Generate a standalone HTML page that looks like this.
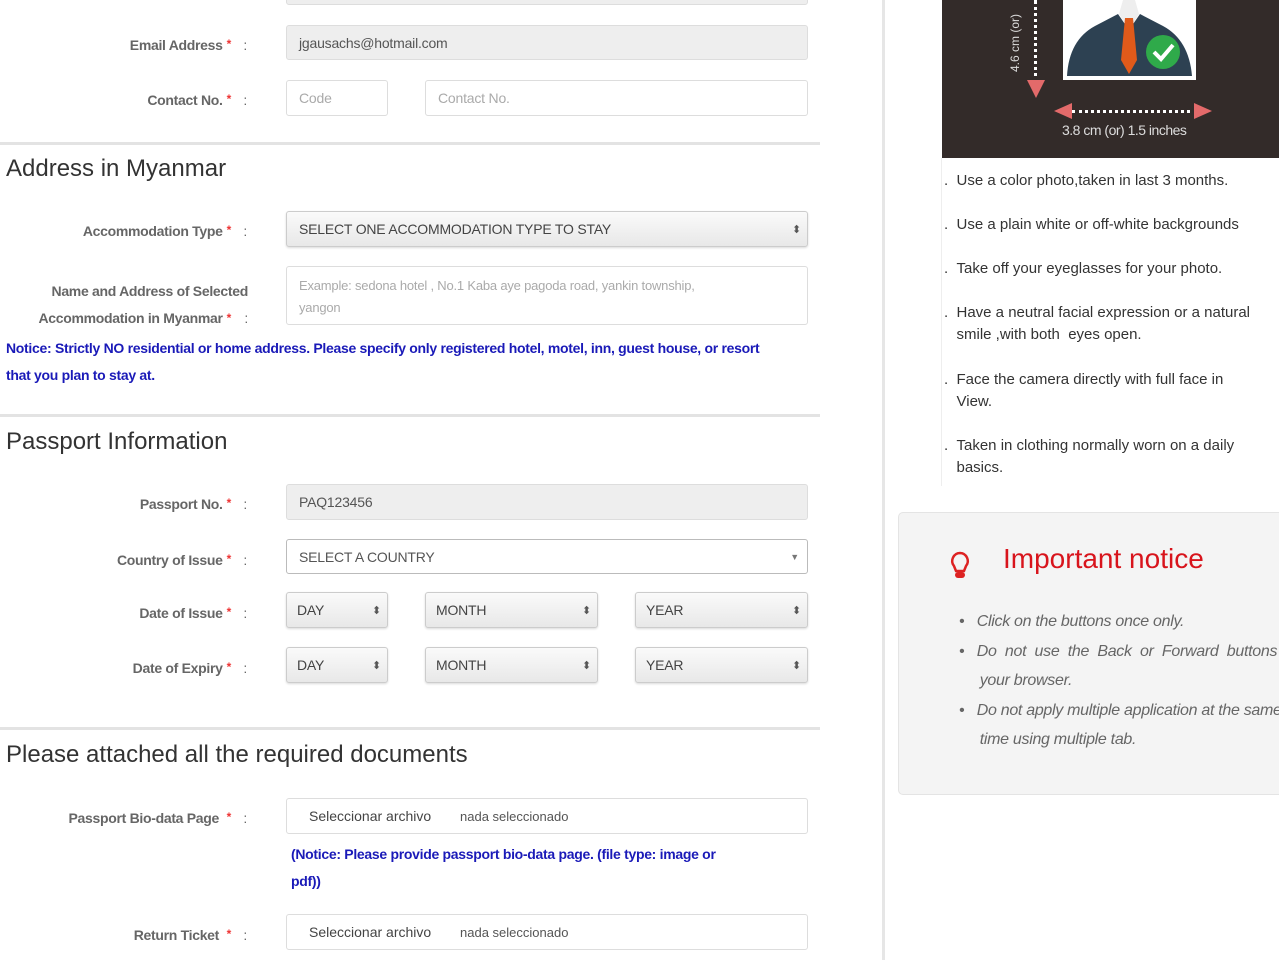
<!DOCTYPE html>
<html><head><meta charset="utf-8"><style>
*{margin:0;padding:0;box-sizing:border-box}
body{width:1279px;height:960px;background:#fff;position:relative;overflow:hidden;font-family:"Liberation Sans",sans-serif}
.a{position:absolute}
.lbl{position:absolute;right:1048px;font-size:14px;font-weight:bold;color:#666;text-align:right;white-space:nowrap;letter-spacing:-0.3px}
.lbl b{color:#e33;font-size:12px;vertical-align:top;margin-left:4px}
.lbl i{position:absolute;right:-16px;font-style:normal;font-weight:normal}
.in{position:absolute;border:1px solid #ddd;border-radius:3px;background:#fff;font-size:14px;color:#555;padding-left:12px;display:flex;align-items:center;letter-spacing:-0.2px}
.gray{background:#eee}
.sel{background:linear-gradient(#fafafa,#e8e8e8);border:1px solid #ccc;box-shadow:0 1px 2px rgba(0,0,0,.15);color:#444}
.sel:after{content:"⬍";position:absolute;right:6px;font-size:11px;color:#555}
.hr{position:absolute;left:0;width:820px;height:3px;background:#e3e3e3}
.h{position:absolute;left:6px;font-size:24px;color:#333}
.blue{position:absolute;color:#1a1ab8;font-size:14px;font-weight:bold;line-height:27px;letter-spacing:-0.3px}
.file{position:absolute;left:286px;width:522px;height:36px;border:1px solid #ddd;border-radius:3px;font-size:14px;color:#444}
.file span{position:absolute;left:22px;top:9px}
.file em{position:absolute;left:173px;top:10px;font-style:normal;font-size:13px;color:#555}
.rt{position:absolute;left:944px;font-size:15px;color:#333;line-height:22px;width:340px}
</style></head><body>
<div class="in gray" style="left:286px;top:-10px;width:522px;height:15px"></div>
<div class="lbl" style="top:37px">Email Address<b>*</b><i>:</i></div>
<div class="in gray" style="left:286px;top:25px;width:522px;height:35px">jgausachs@hotmail.com</div>
<div class="lbl" style="top:92px">Contact No.<b>*</b><i>:</i></div>
<div class="in" style="left:286px;top:80px;width:102px;height:36px;color:#aaa">Code</div>
<div class="in" style="left:425px;top:80px;width:383px;height:36px;color:#aaa">Contact No.</div>
<div class="hr" style="top:142px"></div>
<div class="h" style="top:155px">Address in Myanmar</div>
<div class="lbl" style="top:223px">Accommodation Type<b>*</b><i>:</i></div>
<div class="in sel" style="left:286px;top:211px;width:522px;height:36px">SELECT ONE ACCOMMODATION TYPE TO STAY</div>
<div class="lbl" style="top:278px;line-height:27px;right:1031px">Name and Address of Selected<br><span style="padding-right:17px">Accommodation in Myanmar<b>*</b></span><i style="top:27px;right:0">:</i></div>
<div class="in" style="left:286px;top:266px;width:522px;height:59px;align-items:flex-start;padding-top:8px;font-size:13px;color:#aaa;line-height:22px">Example: sedona hotel , No.1 Kaba aye pagoda road, yankin township,<br>yangon</div>
<div class="blue" style="left:6px;top:335px;width:770px">Notice: Strictly NO residential or home address. Please specify only registered hotel, motel, inn, guest house, or resort that you plan to stay at.</div>
<div class="hr" style="top:414px"></div>
<div class="h" style="top:428px">Passport Information</div>
<div class="lbl" style="top:496px">Passport No.<b>*</b><i>:</i></div>
<div class="in gray" style="left:286px;top:484px;width:522px;height:36px">PAQ123456</div>
<div class="lbl" style="top:552px">Country of Issue<b>*</b><i>:</i></div>
<div class="in" style="left:286px;top:539px;width:522px;height:35px;border-color:#bbb">SELECT A COUNTRY<span class="a" style="right:8px;font-size:9px;color:#777">▼</span></div>
<div class="lbl" style="top:605px">Date of Issue<b>*</b><i>:</i></div>
<div class="in sel" style="left:286px;top:592px;width:102px;height:36px;padding-left:10px">DAY</div>
<div class="in sel" style="left:425px;top:592px;width:173px;height:36px;padding-left:10px">MONTH</div>
<div class="in sel" style="left:635px;top:592px;width:173px;height:36px;padding-left:10px">YEAR</div>
<div class="lbl" style="top:660px">Date of Expiry<b>*</b><i>:</i></div>
<div class="in sel" style="left:286px;top:647px;width:102px;height:36px;padding-left:10px">DAY</div>
<div class="in sel" style="left:425px;top:647px;width:173px;height:36px;padding-left:10px">MONTH</div>
<div class="in sel" style="left:635px;top:647px;width:173px;height:36px;padding-left:10px">YEAR</div>
<div class="hr" style="top:727px"></div>
<div class="h" style="top:741px">Please attached all the required documents</div>
<div class="lbl" style="top:810px">Passport Bio-data Page <b>*</b><i>:</i></div>
<div class="file" style="top:798px"><span>Seleccionar archivo</span><em>nada seleccionado</em></div>
<div class="blue" style="left:291px;top:841px;width:445px">(Notice: Please provide passport bio-data page. (file type: image or pdf))</div>
<div class="lbl" style="top:927px">Return Ticket <b>*</b><i>:</i></div>
<div class="file" style="top:914px"><span>Seleccionar archivo</span><em>nada seleccionado</em></div>

<div class="a" style="left:882px;top:0;width:3px;height:960px;background:#e6e6e6"></div>
<div class="a" style="left:941px;top:158px;width:1px;height:328px;background:#eee"></div>
<div class="a" style="left:942px;top:0;width:337px;height:158px;background:#332b29">
 <div class="a" style="left:121px;top:0;width:133px;height:80px;background:#fff">
  <svg width="133" height="80" viewBox="0 0 133 80"><path d="M4 76 Q6 40 32 26 L55 14 L66 30 L77 14 L100 26 Q126 40 129 76 Z" fill="#2d4152"/><path d="M56 14 L66 30 L76 14 L72 0 L60 0Z" fill="#eee"/><path d="M62 18 L70 18 L74 60 L66 74 L58 60Z" fill="#e05a1a"/><circle cx="100" cy="52" r="17" fill="#2faa4a"/><path d="M91 52 L98 59 L110 45" stroke="#fff" stroke-width="4" fill="none"/></svg>
 </div>
 <div class="a" style="left:92px;top:0;height:84px;border-left:3px dotted #fff"></div>
 <div class="a" style="left:85px;top:80px;width:0;height:0;border-left:9px solid transparent;border-right:9px solid transparent;border-top:18px solid #e36a6a"></div>
 <div class="a" style="left:66px;top:72px;transform:rotate(-90deg);transform-origin:left top;color:#ddd;font-size:12px;white-space:nowrap">4.6 cm (or)</div>
 <div class="a" style="left:130px;top:110px;width:118px;height:0;border-top:3px dotted #fff"></div>
 <div class="a" style="left:112px;top:103px;border-top:8px solid transparent;border-bottom:8px solid transparent;border-right:18px solid #e36a6a"></div>
 <div class="a" style="left:252px;top:103px;border-top:8px solid transparent;border-bottom:8px solid transparent;border-left:18px solid #e36a6a"></div>
 <div class="a" style="left:120px;top:122px;color:#ddd;font-size:14px;letter-spacing:-0.5px">3.8 cm (or) 1.5 inches</div>
</div>
<div class="rt" style="top:170px">. &nbsp;Use a color photo,taken in last 3 months.</div>
<div class="rt" style="top:214px">. &nbsp;Use a plain white or off-white backgrounds</div>
<div class="rt" style="top:258px">. &nbsp;Take off your eyeglasses for your photo.</div>
<div class="rt" style="top:302px">. &nbsp;Have a neutral facial expression or a natural<br>&nbsp;&nbsp;&nbsp;smile ,with both &nbsp;eyes open.</div>
<div class="rt" style="top:369px">. &nbsp;Face the camera directly with full face in<br>&nbsp;&nbsp;&nbsp;View.</div>
<div class="rt" style="top:435px">. &nbsp;Taken in clothing normally worn on a daily<br>&nbsp;&nbsp;&nbsp;basics.</div>

<div class="a" style="left:898px;top:512px;width:400px;height:283px;background:#f4f4f4;border:1px solid #e4e4e4;border-radius:5px">
 <svg class="a" style="left:50px;top:37px" width="22" height="32" viewBox="0 0 22 32"><path d="M11 3 A8 8 0 0 1 17 16 L15 21 L7 21 L5 16 A8 8 0 0 1 11 3Z" fill="none" stroke="#d22" stroke-width="2.5"/><rect x="6" y="22" width="10" height="6" rx="3" fill="#d22"/></svg>
 <div class="a" style="left:104px;top:30px;font-size:28px;color:#d8141c">Important notice</div>
 <div class="a" style="left:60px;top:94px;font-size:16px;font-style:italic;color:#666;line-height:29.5px;width:400px;letter-spacing:-0.3px">
  <div>•&nbsp;&nbsp; Click on the buttons once only.</div>
  <div>•&nbsp;&nbsp; Do &nbsp;not &nbsp;use &nbsp;the &nbsp;Back &nbsp;or &nbsp;Forward &nbsp;buttons<br>&nbsp;&nbsp;&nbsp;&nbsp; your browser.</div>
  <div>•&nbsp;&nbsp; Do not apply multiple application at the same<br>&nbsp;&nbsp;&nbsp;&nbsp; time using multiple tab.</div>
 </div>
</div>
</body></html>
